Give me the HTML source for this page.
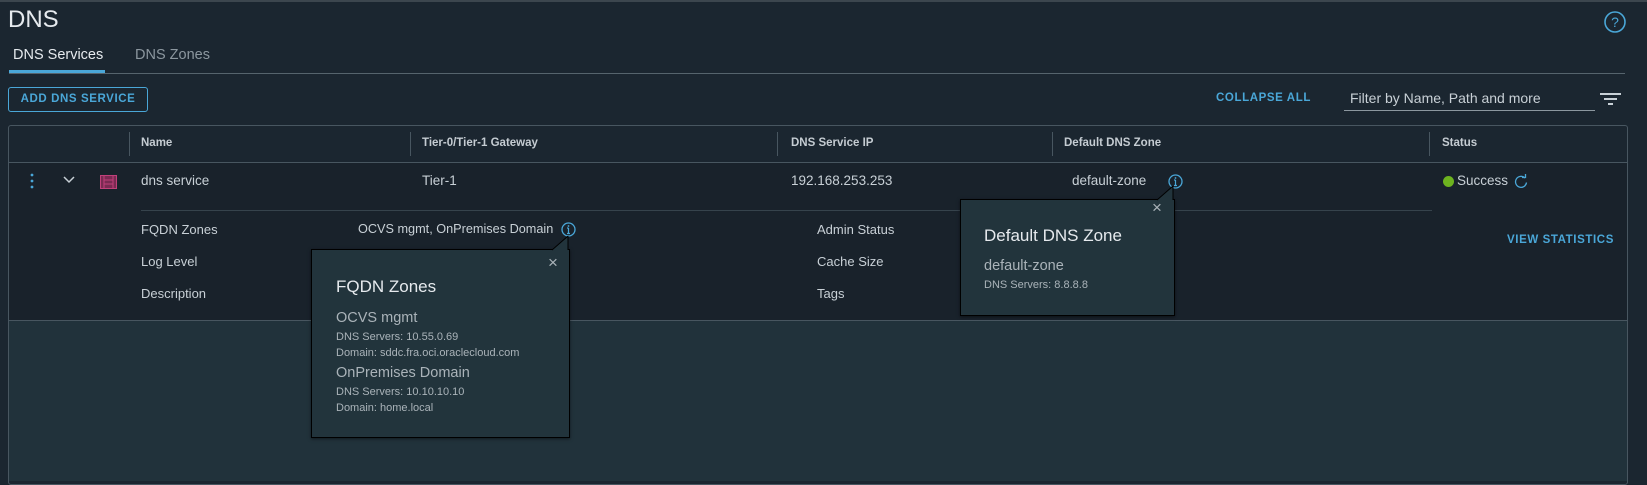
<!DOCTYPE html>
<html><head><meta charset="utf-8"><style>
*{margin:0;padding:0;box-sizing:border-box}
body{width:1647px;height:459px;background:#1b2630;font-family:"Liberation Sans",sans-serif;color:#c8d0d6;position:relative;overflow:hidden;font-size:13px}
.a{position:absolute;white-space:nowrap}
.hd{font-weight:bold;font-size:11.5px;color:#c5ccd2}
.blue{color:#4aa7d8}
.pop{position:absolute;background:#22343c;border:1px solid #000;box-shadow:0 1px 3px rgba(0,0,0,.5)}
</style></head><body>
<div style="position:absolute;left:0;top:0;width:1647px;height:2px;background:#fff;opacity:.15"></div>
<div class="a" style="left:8px;top:6px;font-size:24px;color:#e6eaee">DNS</div>
<svg class="a" style="left:1603px;top:10px" width="24" height="24"><circle cx="12" cy="12" r="10" fill="none" stroke="#4aa7d8" stroke-width="1.6"/><text x="12" y="17" text-anchor="middle" font-size="14" fill="#4aa7d8" font-family="Liberation Sans">?</text></svg>
<div class="a" style="left:13px;top:47px;font-size:14.5px;color:#e6eaee">DNS Services</div>
<div class="a" style="left:135px;top:47px;font-size:14.5px;color:#8c979f">DNS Zones</div>
<div class="a" style="left:9px;top:70px;width:96px;height:3px;background:#4aa7d8"></div>
<div class="a" style="left:9px;top:73px;width:1616px;height:1px;background:#56646d"></div>
<div class="a" style="left:8px;top:87px;width:140px;height:25px;border:1px solid #4aa7d8;border-radius:3px;font-size:11.5px;font-weight:bold;letter-spacing:.6px;color:#4aa7d8;line-height:23px;text-align:center">ADD DNS SERVICE</div>
<div class="a blue" style="left:1216px;top:92px;font-size:11.5px;font-weight:bold;letter-spacing:.6px">COLLAPSE ALL</div>
<div class="a" style="left:1350px;top:90px;font-size:14px;color:#c8d0d6">Filter by Name, Path and more</div>
<div class="a" style="left:1344px;top:110px;width:251px;height:1px;background:#8c979f"></div>
<svg class="a" style="left:1600px;top:92px" width="22" height="14"><path d="M0 2H21M4 7H17M8 12H13" stroke="#c8d0d6" stroke-width="2"/></svg>
<!-- table -->
<div class="a" style="left:8px;top:125px;width:1620px;height:360px;border:1px solid #485660;border-radius:3px;background:#1b2630"></div>
<div class="a" style="left:9px;top:162px;width:1618px;height:1px;background:#485660"></div>
<div class="a" style="left:129px;top:132px;width:1px;height:24px;background:#485660"></div>
<div class="a" style="left:410px;top:132px;width:1px;height:24px;background:#485660"></div>
<div class="a" style="left:777px;top:132px;width:1px;height:24px;background:#485660"></div>
<div class="a" style="left:1052px;top:132px;width:1px;height:24px;background:#485660"></div>
<div class="a" style="left:1429px;top:132px;width:1px;height:24px;background:#485660"></div>
<div class="a hd" style="left:141px;top:137px">Name</div>
<div class="a hd" style="left:422px;top:137px">Tier-0/Tier-1 Gateway</div>
<div class="a hd" style="left:791px;top:137px">DNS Service IP</div>
<div class="a hd" style="left:1064px;top:137px">Default DNS Zone</div>
<div class="a hd" style="left:1442px;top:137px">Status</div>
<!-- row -->
<div class="a" style="left:9px;top:163px;width:1618px;height:157px;background:#19222b"></div>
<div class="a" style="left:9px;top:320px;width:1618px;height:1px;background:#485660"></div>
<div class="a" style="left:9px;top:321px;width:1618px;height:160px;background:#21323b"></div>
<svg class="a" style="left:29px;top:172px" width="6" height="18"><circle cx="3" cy="3" r="1.4" fill="#4aa7d8"/><circle cx="3" cy="9" r="1.4" fill="#4aa7d8"/><circle cx="3" cy="15" r="1.4" fill="#4aa7d8"/></svg>
<svg class="a" style="left:63px;top:176px" width="12" height="8"><path d="M1 1L6 6L11 1" fill="none" stroke="#c8d0d6" stroke-width="1.5"/></svg>
<svg class="a" style="left:100px;top:175px" width="17" height="14"><rect x=".5" y=".5" width="16" height="13" fill="#7a2a52" stroke="#c0407a"/><path d="M4 1V13M13 1V13M4 5H13M4 9H13" stroke="#c0407a"/></svg>
<div class="a" style="left:141px;top:173px;font-size:13.5px">dns service</div>
<div class="a" style="left:422px;top:173px;font-size:13.5px">Tier-1</div>
<div class="a" style="left:791px;top:173px;font-size:13.5px">192.168.253.253</div>
<div class="a" style="left:1072px;top:173px;font-size:13.5px">default-zone</div>
<svg class="a" style="left:1168px;top:174px" width="15" height="15"><circle cx="7.5" cy="7.5" r="6.5" fill="none" stroke="#4aa7d8" stroke-width="1.3"/><path d="M7.5 6V11.5M6 11.5H9M6 6H7.5" stroke="#4aa7d8" stroke-width="1.2"/><circle cx="7.5" cy="4" r=".9" fill="#4aa7d8"/></svg>
<div class="a" style="left:1443px;top:176px;width:11px;height:11px;border-radius:50%;background:#6db31f"></div>
<div class="a" style="left:1457px;top:173px;font-size:13.5px">Success</div>
<svg class="a" style="left:1514px;top:174px" width="14" height="15"><path d="M11 4A5.5 5.5 0 1 0 12.5 8.5" fill="none" stroke="#4aa7d8" stroke-width="1.3"/><path d="M8 3.5H11.5V0" fill="none" stroke="#4aa7d8" stroke-width="1.3"/></svg>
<div class="a" style="left:141px;top:210px;width:1291px;height:1px;background:#36434c"></div>
<div class="a" style="left:141px;top:222px;font-size:13px">FQDN Zones</div>
<div class="a" style="left:141px;top:254px;font-size:13px">Log Level</div>
<div class="a" style="left:141px;top:286px;font-size:13px">Description</div>
<div class="a" style="left:358px;top:222px;font-size:12.7px">OCVS mgmt, OnPremises Domain</div>
<svg class="a" style="left:561px;top:222px" width="15" height="15"><circle cx="7.5" cy="7.5" r="6.5" fill="none" stroke="#4aa7d8" stroke-width="1.3"/><path d="M7.5 6V11.5M6 11.5H9M6 6H7.5" stroke="#4aa7d8" stroke-width="1.2"/><circle cx="7.5" cy="4" r=".9" fill="#4aa7d8"/></svg>
<div class="a" style="left:817px;top:222px;font-size:13px">Admin Status</div>
<div class="a" style="left:817px;top:254px;font-size:13px">Cache Size</div>
<div class="a" style="left:817px;top:286px;font-size:13px">Tags</div>
<div class="a blue" style="left:1507px;top:234px;font-size:11.5px;font-weight:bold;letter-spacing:.6px">VIEW STATISTICS</div>
<!-- FQDN popover -->
<div class="pop" style="left:311px;top:249px;width:259px;height:189px">
<svg class="a" style="left:240px;top:-14px" width="18" height="16"><path d="M0 14L16 14L16 0Z" fill="#22343c"/><path d="M16 0L0 14" stroke="#000"/><path d="M16 0V14" stroke="#000"/></svg>
<div class="a" style="left:236px;top:3px;font-size:17px;color:#aab3b9">×</div>
<div class="a" style="left:24px;top:27px;font-size:17px;color:#e6eaee">FQDN Zones</div>
<div class="a" style="left:24px;top:60px;font-size:14.5px;color:#aab3b9">OCVS mgmt</div>
<div class="a" style="left:24px;top:81px;font-size:11px;color:#aab3b9">DNS Servers: 10.55.0.69</div>
<div class="a" style="left:24px;top:97px;font-size:11px;color:#aab3b9">Domain: sddc.fra.oci.oraclecloud.com</div>
<div class="a" style="left:24px;top:115px;font-size:14.5px;color:#aab3b9">OnPremises Domain</div>
<div class="a" style="left:24px;top:136px;font-size:11px;color:#aab3b9">DNS Servers: 10.10.10.10</div>
<div class="a" style="left:24px;top:152px;font-size:11px;color:#aab3b9">Domain: home.local</div>
</div>
<!-- Default popover -->
<div class="pop" style="left:960px;top:199px;width:215px;height:117px">
<svg class="a" style="left:196px;top:-14px" width="18" height="16"><path d="M0 14L16 14L16 0Z" fill="#22343c"/><path d="M16 0L0 14" stroke="#000"/><path d="M16 0V14" stroke="#000"/></svg>
<div class="a" style="left:191px;top:-2px;font-size:17px;color:#aab3b9">×</div>
<div class="a" style="left:23px;top:26px;font-size:17px;color:#e6eaee">Default DNS Zone</div>
<div class="a" style="left:23px;top:58px;font-size:14.5px;color:#aab3b9">default-zone</div>
<div class="a" style="left:23px;top:79px;font-size:11px;color:#aab3b9">DNS Servers: 8.8.8.8</div>
</div>
</body></html>
